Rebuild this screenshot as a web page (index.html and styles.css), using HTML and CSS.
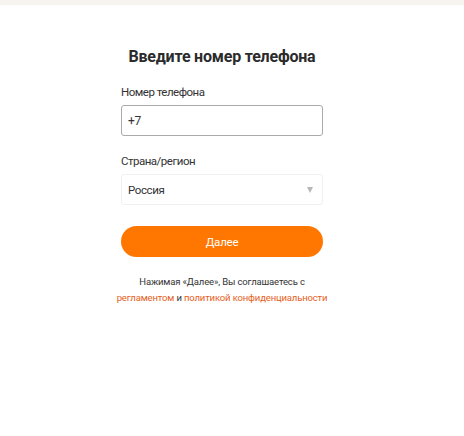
FILE: index.html
```html
<!DOCTYPE html>
<html lang="ru">
<head>
    <meta charset="UTF-8">
    <meta name="viewport" content="width=device-width, initial-scale=1.0">
    <title>Вход по номеру телефона</title>
    <link rel="stylesheet" href="styles.css">
</head>
<body>
    <div class="top-bar"></div>
    <div class="container">
        <h1>Введите номер телефона</h1>
        <div class="form-group">
            <label for="phone">Номер телефона</label>
            <input type="text" id="phone" value="+7">
        </div>
        <div class="form-group">
            <label for="country">Страна/регион</label>
            <div class="select" id="country">
                <span>Россия</span>
                <span class="arrow"></span>
            </div>
        </div>
        <button class="next">Далее</button>
        <p class="terms">
            Нажимая «Далее», Вы соглашаетесь с<br>
            <a href="#">регламентом</a> и <a href="#">политикой конфиденциальности</a>
        </p>
    </div>
</body>
</html>
```

FILE: styles.css
```css
body {
    font-family: Roboto, "Liberation Sans", Arial, sans-serif;
    background: #fff;
    color: #333;
    margin: 0;
    padding: 0;
}

.top-bar {
    height: 5px;
    background: #f7f3ef;
}

.container {
    width: 202px;
    margin-left: 121px;
    padding-top: 42px;
}

h1 {
    margin: 0 -30px 18px;
    font-size: 16px;
    line-height: 20px;
    letter-spacing: -0.2px;
    font-weight: bold;
    color: #2b2b2b;
    text-align: center;
    white-space: nowrap;
}

.form-group {
    margin-bottom: 18px;
}

label {
    display: block;
    margin-bottom: 6px;
    font-size: 11.5px;
    line-height: 14px;
    letter-spacing: -0.5px;
    color: #333;
}

input[type="text"] {
    display: block;
    width: 100%;
    height: 31px;
    padding: 0 6px;
    border: 1px solid #aaa;
    border-radius: 3px;
    box-sizing: border-box;
    font-family: inherit;
    font-size: 12px;
    letter-spacing: -0.3px;
    color: #333;
}

.select {
    display: flex;
    justify-content: space-between;
    align-items: center;
    height: 31px;
    padding: 0 9px 0 6px;
    border: 1px solid #f0f0f0;
    border-radius: 3px;
    box-sizing: border-box;
    font-size: 11.5px;
    letter-spacing: -0.4px;
    color: #333;
}

.arrow {
    width: 0;
    height: 0;
    border-left: 3px solid transparent;
    border-right: 3px solid transparent;
    border-top: 6px solid #b8b8b8;
}

.next {
    display: block;
    width: 100%;
    height: 31px;
    margin-top: 21px;
    background-color: #ff7700;
    color: #fff;
    border: none;
    border-radius: 16px;
    font-family: inherit;
    font-size: 11.5px;
    letter-spacing: -0.2px;
    cursor: pointer;
}

.terms {
    margin: 17px -30px 0;
    text-align: center;
    font-size: 9.5px;
    line-height: 16px;
    letter-spacing: -0.15px;
    color: #333;
}

.terms a {
    color: #e6601c;
    text-decoration: none;
}
```
